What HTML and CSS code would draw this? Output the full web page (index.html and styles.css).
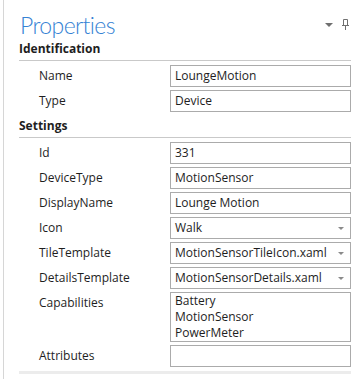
FILE: index.html
```html
<!DOCTYPE html>
<html lang="en">
<head>
    <meta charset="UTF-8">
    <meta name="viewport" content="width=device-width, initial-scale=1.0">
    <title>Properties</title>
    <link rel="stylesheet" href="styles.css">
</head>
<body>
    <div class="panel">
        <div class="panel-header">
            <h1 class="title">Properties</h1>
            <div class="header-tools">
                <span class="menu-arrow"></span>
                <svg class="pin" width="7" height="11" viewBox="0 0 7 11">
                    <path d="M1.5 0.5h4v6h-4z M0 6.5h7 M3.5 7v4" fill="none" stroke="#707070" stroke-width="1"/>
                </svg>
            </div>
        </div>

        <div class="section">
            <div class="section-title">Identification</div>
            <div class="row">
                <span class="label">Name</span>
                <div class="field">LoungeMotion</div>
            </div>
            <div class="row">
                <span class="label">Type</span>
                <div class="field">Device</div>
            </div>
        </div>

        <div class="section">
            <div class="section-title">Settings</div>
            <div class="row">
                <span class="label">Id</span>
                <div class="field">331</div>
            </div>
            <div class="row">
                <span class="label">DeviceType</span>
                <div class="field">MotionSensor</div>
            </div>
            <div class="row">
                <span class="label">DisplayName</span>
                <div class="field">Lounge Motion</div>
            </div>
            <div class="row">
                <span class="label">Icon</span>
                <div class="field combo">Walk</div>
            </div>
            <div class="row">
                <span class="label">TileTemplate</span>
                <div class="field combo">MotionSensorTileIcon.xaml</div>
            </div>
            <div class="row">
                <span class="label">DetailsTemplate</span>
                <div class="field combo">MotionSensorDetails.xaml</div>
            </div>
            <div class="row">
                <span class="label">Capabilities</span>
                <div class="field list">
                    <div>Battery</div>
                    <div>MotionSensor</div>
                    <div>PowerMeter</div>
                </div>
            </div>
            <div class="row">
                <span class="label">Attributes</span>
                <div class="field"></div>
            </div>
        </div>

        <div class="footer-line"></div>
    </div>
</body>
</html>
```

FILE: styles.css
```css
body {
    margin: 0;
    background: #ffffff;
    font-family: 'Open Sans', 'Noto Sans', sans-serif;
    font-size: 12px;
    color: #1e1e1e;
    overflow: hidden;
}

.panel {
    margin-left: 3px;
    border-left: 1px solid #d6d6d6;
    height: 100vh;
    padding: 0 8px 0 15px;
}

.panel-header {
    display: flex;
    align-items: flex-start;
    justify-content: space-between;
    height: 40px;
}

.title {
    margin: 11px 0 0 1px;
    font-family: 'Lato', 'Open Sans', sans-serif;
    font-size: 23px;
    font-weight: 300;
    letter-spacing: -0.6px;
    color: #3582d4;
    line-height: 28px;
}

.header-tools {
    display: flex;
    align-items: center;
    gap: 9px;
    margin-top: 19px;
    margin-right: 2px;
}

.menu-arrow {
    width: 0;
    height: 0;
    border-left: 4px solid transparent;
    border-right: 4px solid transparent;
    border-top: 4px solid #6f6f6f;
}

.section-title {
    font-weight: 700;
    font-size: 12px;
    line-height: 18px;
    padding-bottom: 2px;
    border-bottom: 1px solid #c9c9c9;
    margin-bottom: 4px;
}

.section + .section {
    margin-top: 5px;
}

.row {
    display: flex;
    align-items: flex-start;
    margin-bottom: 3px;
}

.label {
    width: 131px;
    padding-left: 20px;
    line-height: 22px;
}

.field {
    position: relative;
    flex: 1;
    height: 20px;
    border: 1px solid #ababab;
    padding: 0 4px;
    line-height: 20px;
    white-space: nowrap;
    overflow: hidden;
}

.field.combo::after {
    content: '';
    position: absolute;
    right: 6px;
    top: 9px;
    border-left: 3px solid transparent;
    border-right: 3px solid transparent;
    border-top: 3px solid #8a8a8a;
}

.field.list {
    height: auto;
    padding-top: 0;
    padding-bottom: 0;
    line-height: 16px;
}

.footer-line {
    margin-top: 4px;
    height: 3px;
    background: #ececec;
}
```
